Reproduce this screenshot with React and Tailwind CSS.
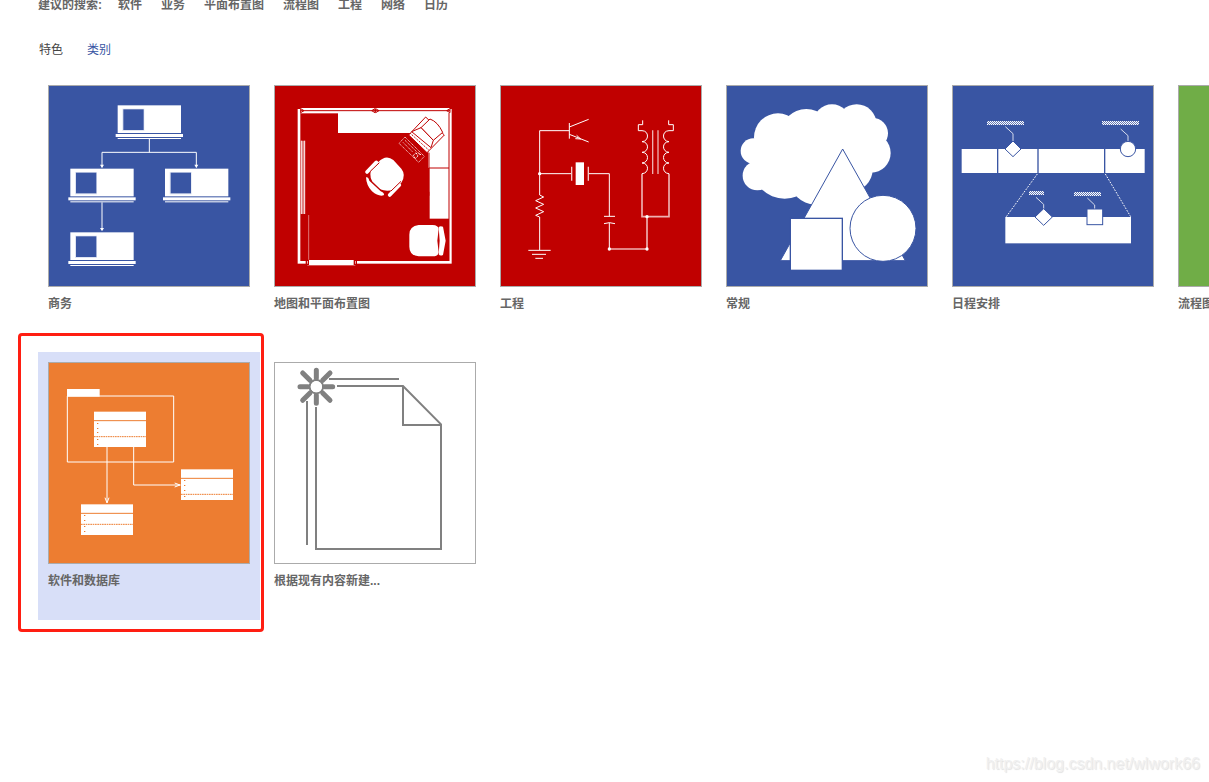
import React from 'react';

const BLUE = '#3955a3';
const RED = '#c00000';
const ORANGE = '#ed7d31';

// A laptop-like shape from the org chart, drawn from its top left corner
const OrgBox = ({ x, y }) => (
  <g transform={`translate(${x} ${y})`}>
    <rect width="190" height="83" fill="#fff" />
    <rect x="14" y="10" width="66" height="67" fill="#dfe4f2" />
    <rect x="17" y="12" width="61" height="62" fill={BLUE} />
    <rect x="-6" y="86" width="202" height="9" fill="#fff" />
    <rect y="98" width="190" height="3" fill="#fff" />
  </g>
);

const BusinessArt = () => (
  <svg viewBox="27 18 600 600" className="block w-full bg-[#3955a3]" aria-hidden="true">
    <OrgBox x={233} y={76} />
    <OrgBox x={91} y={266} />
    <OrgBox x={375} y={266} />
    <OrgBox x={91} y={457} />
    <g fill="none" stroke="#fff" strokeWidth="3">
      <path d="M328 177V217M186 262V217H469V262M186 367V450" />
    </g>
    <path d="M180 254h12l-6 10zM463 254h12l-6 10zM180 444h12l-6 10z" fill="#fff" />
  </svg>
);

const FloorPlanArt = () => (
  <svg viewBox="27 18 600 600" className="block w-full bg-[#c00000]" aria-hidden="true">
    <rect x="99" y="91" width="454" height="456" fill="none" stroke="#fff" strokeWidth="8" />
    <rect x="104" y="84" width="448" height="16" fill="#fff" />
    <path d="M216 97H549V264H487V159H216z" fill="#fff" />
    <rect x="490" y="264" width="59" height="152" fill="#fff" />
    <g fill="none" stroke={RED} strokeWidth="3">
      <path d="M104 92H552M549 99V543M488 264H549M489 218V417" />
      <path d="M104 86l10 6-10 6zM317 92l10-6v12zM339 92l-10-6v12zM552 86l-10 6 10 6z" />
    </g>
    <path d="M106 182V402M116 182V402" stroke="#fff" strokeWidth="3" />
    <path d="M111 182V402" stroke="#e59a9a" strokeWidth="5" />
    <path d="M128 405V541" stroke="#dd7373" strokeWidth="3" />
    <rect x="124" y="540" width="144" height="16" fill="#fff" />
    <g fill="#fff" stroke={RED} strokeWidth="4">
      <path d="M121 541h6v12h-6zM265 541h6v12h-6z" />
    </g>

    {/* desktop computer in the corner */}
    <g fill="#fff" stroke={RED} strokeWidth="3">
      <path d="M479 111L535 165L483 218L428 165z" />
      <path d="M465 143L492 117Q515 125 530 157L502 181z" />
      <path d="M465 143L502 181L495 203L437 155z" />
      <path d="M433 160L488 210" fill="none" strokeDasharray="4 3" />
    </g>
    <g fill="none" stroke="#f0bcbc" strokeWidth="3" strokeDasharray="4 2">
      <path d="M417 171L475 229L458 247L399 190z" />
      <path d="M417 181L462 225M411 187L440 216" />
      <path d="M442 226l8-8 6 10-8 8zM458 218l8 8" stroke="#fff" />
    </g>

    {/* desk chair */}
    <path
      d="M337 246Q360 222 382 240L406 266Q421 285 406 308L382 329Q363 336 342 328L319 305Q306 282 321 261z"
      fill="#fff"
    />
    <g fill="none" stroke="#fff" strokeWidth="11" strokeLinecap="round">
      <path d="M303 276L331 247M371 345L400 315" />
    </g>
    <path d="M300 292Q307 290 310 302L344 334Q358 341 353 346Q338 351 318 334Q301 317 300 292z" fill="#fff" />
    <path d="M340 248L313 274M312 300L346 332M375 333L405 304" stroke={RED} strokeWidth="3" fill="none" />

    {/* armchair */}
    <path d="M458 435H500Q517 436 518 447L514 482L518 517Q517 529 500 529H458Q430 526 430 500V464Q430 438 458 435z" fill="#fff" />
    <path d="M518 442Q522 436 531 440L539 482L531 525Q522 529 518 523L521 482z" fill="#fff" />
    <path d="M488 335v12" stroke={RED} strokeWidth="4" />
  </svg>
);

const EngineeringArt = () => (
  <svg viewBox="27 18 600 600" className="block w-full bg-[#c00000]" aria-hidden="true">
    <g fill="none" stroke="#fff" strokeWidth="3">
      <path d="M232 152H143V345l12 6-24 11 24 11-24 11 24 11-24 11 12 5V510" />
      <path d="M232 129V176M232 141L290 118M232 163L290 186M250 176l16 1-12-11" />
      <path d="M109 511H176M120 523H162M130 535H153" />
      <path d="M143 281H239M289 281H352V409M336 409H369M336 431Q352 425 369 431M352 428V507" />
      <path d="M239 260V302M289 260V302" stroke="#f3c9c9" strokeWidth="4" />
      <path d="M352 507H465V410M450 281V410H531V281" stroke="#eeb0b0" strokeWidth="5" />
      <path d="M452 121V134H439V152H450c22 0 22 32 0 33c22 0 22 31 0 32c22 0 22 31 0 32c22 0 22 31 0 32" />
      <path d="M530 121V134H544V152H531c-22 0-22 32 0 33c-22 0-22 31 0 32c-22 0-22 31 0 32c-22 0-22 31 0 32" />
      <path d="M482 151V282M498 151V282" stroke="#eeb0b0" strokeWidth="4" />
    </g>
    <g fill="#fff">
      <rect x="251" y="247" width="25" height="68" />
      <circle cx="143" cy="281" r="5" />
      <circle cx="352" cy="507" r="5" />
      <circle cx="465" cy="507" r="5" />
      <circle cx="465" cy="410" r="5" />
    </g>
  </svg>
);

const GeneralArt = () => (
  <svg viewBox="27 18 600 600" className="block w-full bg-[#3955a3]" aria-hidden="true">
    <g fill="#fff">
      <circle cx="180" cy="172" r="72" />
      <circle cx="265" cy="165" r="78" />
      <circle cx="342" cy="129" r="56" />
      <circle cx="416" cy="133" r="60" />
      <circle cx="464" cy="160" r="46" />
      <circle cx="459" cy="219" r="59" />
      <circle cx="398" cy="268" r="66" />
      <circle cx="106" cy="213" r="38" />
      <circle cx="118" cy="287" r="44" />
      <circle cx="200" cy="258" r="98" />
      <circle cx="290" cy="300" r="73" />
      <path d="M110 180L300 100L460 140L470 260L340 330L200 320L100 260z" />
    </g>
    <path d="M374 207L562 542H187z" fill="#fff" stroke={BLUE} strokeWidth="3" />
    <rect x="217" y="415" width="156" height="156" fill="#fff" stroke={BLUE} strokeWidth="4" />
    <circle cx="495" cy="445" r="99" fill="#fff" stroke={BLUE} strokeWidth="3" />
  </svg>
);

const ScheduleArt = () => (
  <svg viewBox="27 18 600 600" className="block w-full bg-[#3955a3]" aria-hidden="true">
    <defs>
      <pattern id="caption" width="6" height="12" patternUnits="userSpaceOnUse" x="129" y="123">
        <rect width="6" height="12" fill="#fff" />
        <path d="M0 0h3v3h-3zM3 3h3v3h-3zM0 6h3v3h-3zM3 9h3v3h-3z" fill={BLUE} fillOpacity="0.8" />
      </pattern>
    </defs>
    <g fill="url(#caption)">
      <rect x="129" y="123" width="111" height="12" />
      <rect x="474" y="123" width="111" height="12" />
      <rect x="255" y="333" width="45" height="12" />
      <rect x="390" y="336" width="81" height="12" />
    </g>
    <rect x="53" y="207" width="549" height="72" fill="#fff" />
    <rect x="184" y="411" width="377" height="79" fill="#fff" />
    <path d="M161 207V279M282 207V279M482 207V279" stroke={BLUE} strokeWidth="4" />
    <g fill="none" stroke="#d5dbec" strokeWidth="3">
      <path d="M184 140L207 161V184M530 147L552 167V184M276 352L299 373V388M430 354L452 375V388" />
      <path d="M280 282L187 410M484 282L560 410" stroke="#fff" strokeDasharray="5 4" />
    </g>
    <g fill="#fff" stroke={BLUE} strokeWidth="3">
      <path d="M207 183L231 207L207 230L183 207zM299 386L325 411L299 436L273 411z" />
      <circle cx="552" cy="207" r="23" />
      <rect x="429" y="387" width="47" height="47" />
    </g>
  </svg>
);

// Class box; rows are the y positions of the attribute marks
const ClassBox = ({ x, y, height, divider, rows }) => (
  <g transform={`translate(${x} ${y})`}>
    <rect width="156" height={height} fill="#fff" />
    <path d="M0 27H156" stroke={ORANGE} strokeWidth="3" />
    <path d={`M0 ${divider}H156`} stroke={ORANGE} strokeWidth="3" strokeDasharray="5 2" />
    {rows.map((row) => (
      <rect key={row} x="9" y={row} width="4" height="3" fill={ORANGE} />
    ))}
  </g>
);

const SoftwareArt = () => (
  <svg viewBox="117 114 600 600" className="block w-full bg-[#ed7d31]" aria-hidden="true">
    <rect x="171" y="192" width="98" height="23" fill="#fff" />
    <g fill="none" stroke="#fff" strokeWidth="3">
      <path d="M172 213H491V411H172z" />
      <path d="M291 366V532M285 518l6 16 6-16M371 366V480H512M494 474l16 6-16 6" />
    </g>
    <ClassBox x={252} y={260} height={106} divider={75} rows={[34, 49, 61, 82, 97]} />
    <ClassBox x={513} y={433} height={92} divider={75} rows={[32, 47, 62, 80]} />
    <ClassBox x={213} y={538} height={92} divider={60} rows={[32, 47, 65, 80]} />
  </svg>
);

const NewFromExistingArt = () => (
  <svg viewBox="27 39 600 600" className="block w-full bg-white" aria-hidden="true">
    <g fill="none" stroke="#808080" strokeWidth="6">
      <path d="M189 87H399M123 153V585M213 108H411L525 223V597H150V171M411 108V225H525" />
      <circle cx="151" cy="110" r="20" />
      <path
        d="M151 61V84M151 136V160M102 110H126M176 110H200M110 69L132 91M192 69L170 91M110 151L132 129M192 151L170 129"
        strokeWidth="15"
        strokeLinecap="round"
      />
    </g>
    <circle cx="151" cy="110" r="17" fill="#fff" />
  </svg>
);

const FlowchartArt = () => (
  <svg viewBox="0 0 600 600" className="block w-full bg-[#70ad47]" aria-hidden="true" />
);

const searches = ['软件', '业务', '平面布置图', '流程图', '工程', '网络', '日历'];

const categories = [
  { name: '商务', Art: BusinessArt },
  { name: '地图和平面布置图', Art: FloorPlanArt },
  { name: '工程', Art: EngineeringArt },
  { name: '常规', Art: GeneralArt },
  { name: '日程安排', Art: ScheduleArt },
  { name: '流程图', Art: FlowchartArt },
  { name: '软件和数据库', Art: SoftwareArt, selected: true },
  { name: '根据现有内容新建...', Art: NewFromExistingArt },
];

const CategoryCard = ({ name, Art, selected }) => (
  <div className="relative">
    <button
      type="button"
      className={`flex min-h-[268px] w-full flex-col p-2.5 text-left ${selected ? 'bg-[#d8dff8]' : ''}`}
    >
      <span className="block w-full border border-[#ababab]">
        <Art />
      </span>
      <span className="mt-[9px] whitespace-nowrap text-xs leading-4 font-bold text-[#666]">{name}</span>
    </button>
    {selected && (
      <div className="pointer-events-none absolute -top-[19px] -right-1 -bottom-3 -left-5 rounded-[4px] border-3 border-[#ff1e12]" />
    )}
  </div>
);

const App = () => {
  return (
    <div className="flex min-h-screen flex-col overflow-hidden bg-white font-['Liberation_Sans','Noto_Sans_CJK_SC',sans-serif]">
      <div className="-mt-[3px] flex items-center pl-[38px] text-xs leading-4 font-bold text-[#666]">
        <span className="mr-4">建议的搜索:</span>
        <nav className="flex gap-[19px]">
          {searches.map((item) => (
            <a key={item} href="#" className="whitespace-nowrap">
              {item}
            </a>
          ))}
        </nav>
      </div>

      <div className="mt-[29px] flex gap-6 pl-[39px] text-xs leading-4">
        <button type="button" className="text-[#444]">特色</button>
        <button type="button" className="text-[#3955a3]">类别</button>
      </div>

      <main className="mt-[17px] grid grid-cols-[repeat(6,222px)] gap-x-1 gap-y-[9px] pl-[38px]">
        {categories.map((category) => (
          <CategoryCard key={category.name} {...category} />
        ))}
      </main>

      <footer className="mt-auto pr-[9px] pb-2 text-right text-base leading-5 text-[#f0f0f0] [text-shadow:1px_1px_1px_#e2e2e2]">
        https://blog.csdn.net/wlwork66
      </footer>
    </div>
  );
};

export default App;
